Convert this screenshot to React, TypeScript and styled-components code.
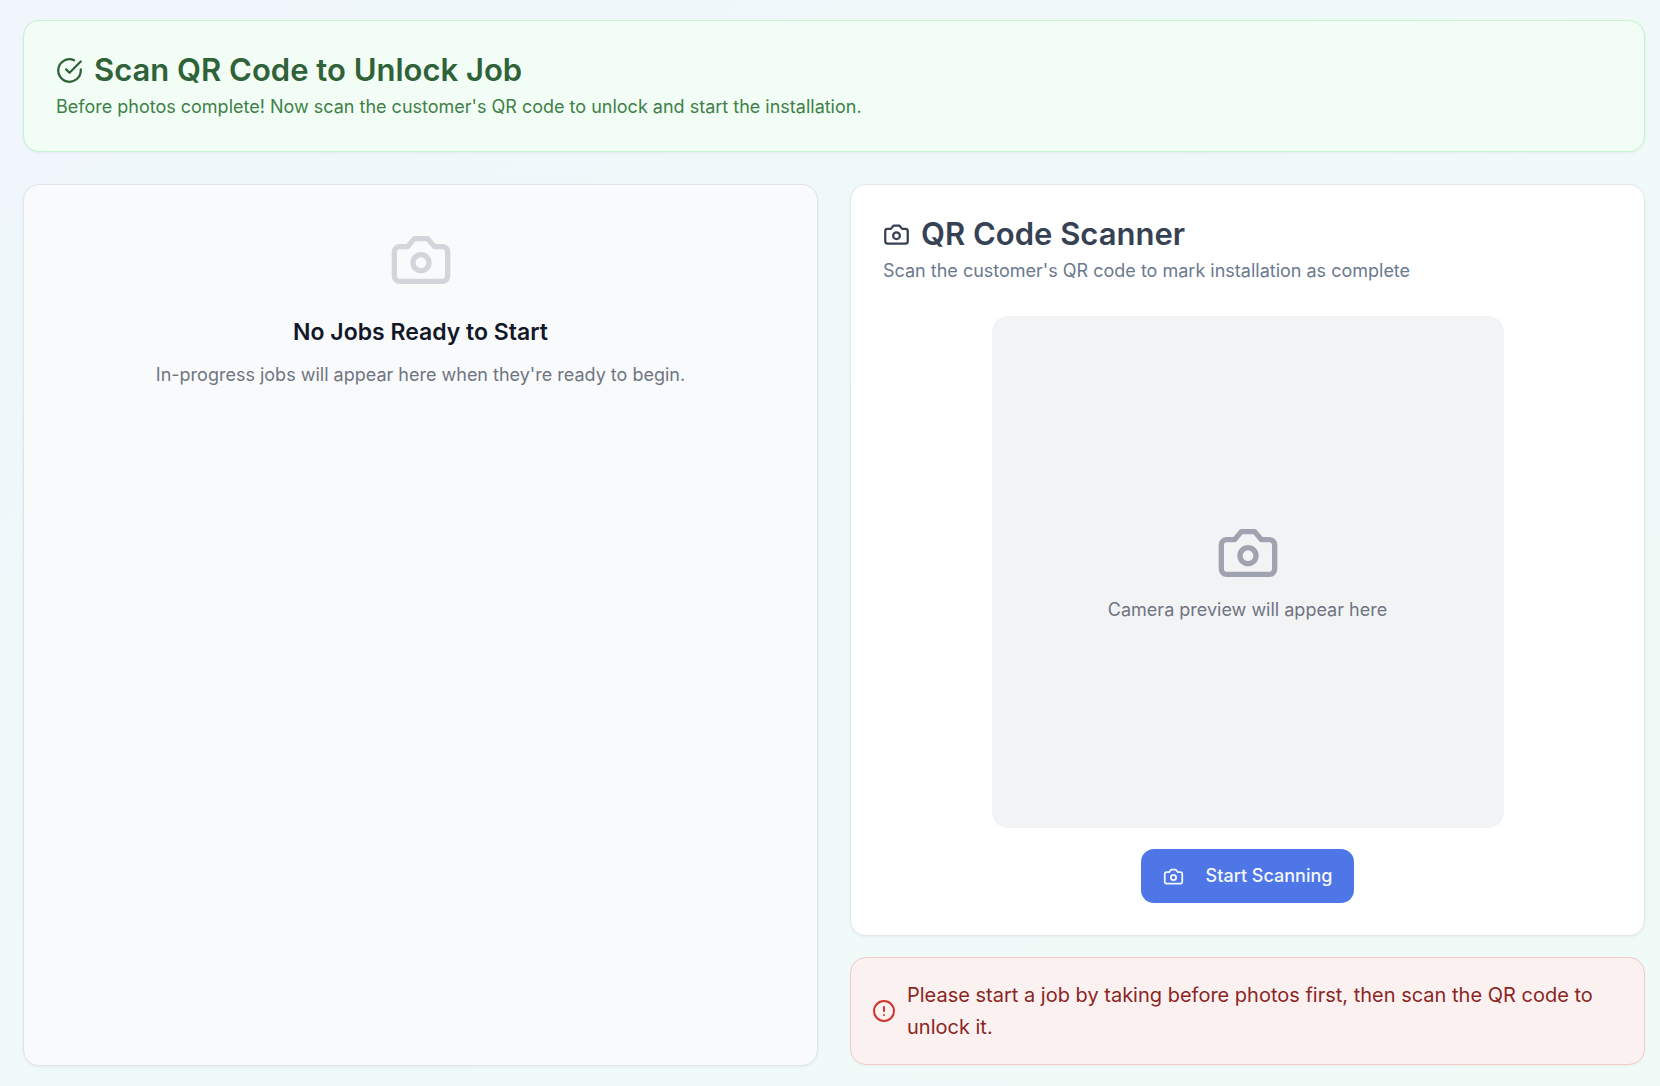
import React from "react";
import styled, { createGlobalStyle } from "styled-components";

const GlobalStyle = createGlobalStyle`
  *, *::before, *::after { box-sizing: border-box; }
  body {
    margin: 0;
    font-family: Inter, "Liberation Sans", sans-serif;
    -webkit-font-smoothing: antialiased;
  }
  h1, h2, h3, p { margin: 0; }
`;

const Page = styled.main`
  min-height: 100vh;
  padding: 20px 15px 20px 23px;
  display: flex;
  flex-direction: column;
  gap: 32px;
  background: linear-gradient(145deg, #f0f6fc 0%, #f0f7fb 15%, #f0f9f9 40%, #f0faf8 65%, #f0faf7 100%);
`;

const tones = {
  plain: { bg: "#ffffff", border: "#e4e8ec" },
  muted: { bg: "#f9fafc", border: "#e1e5e9" },
  success: { bg: "#f2fdf5", border: "#c5f3d2" },
};

const Card = styled.section<{ $tone: keyof typeof tones }>`
  padding: 32px;
  border: 1px solid ${(p) => tones[p.$tone].border};
  border-radius: 16px;
  background: ${(p) => tones[p.$tone].bg};
  box-shadow: 0 1px 3px rgba(0, 0, 0, 0.06);
`;

const Columns = styled.div`
  flex: 1;
  display: grid;
  grid-template-columns: repeat(2, minmax(0, 1fr));
  gap: 32px;
`;

const Stack = styled.div`
  display: flex;
  flex-direction: column;
  gap: 21px;
`;

const Header = styled.header`
  display: flex;
  flex-direction: column;
  gap: 8px;
`;

const Title = styled.h2<{ $color: string }>`
  display: flex;
  align-items: center;
  gap: 11px;
  font-size: 31px;
  line-height: 34px;
  font-weight: 600;
  color: ${(p) => p.$color};
`;

const Text = styled.p<{ $color: string }>`
  font-size: 18px;
  line-height: 24px;
  color: ${(p) => p.$color};
`;

const EmptyState = styled.div`
  display: flex;
  flex-direction: column;
  align-items: center;
  gap: 13px;
  padding-top: 11px;
  text-align: center;
`;

const EmptyTitle = styled.h3`
  margin-top: 9px;
  font-size: 23px;
  line-height: 36px;
  font-weight: 600;
  color: #111827;
`;

const Scanner = styled.div`
  display: flex;
  flex-direction: column;
  align-items: center;
  gap: 21px;
  margin-top: 33px;
`;

const Preview = styled.div`
  width: 100%;
  max-width: 512px;
  aspect-ratio: 1;
  display: flex;
  flex-direction: column;
  align-items: center;
  justify-content: center;
  gap: 13px;
  padding-bottom: 2px;
  border-radius: 16px;
  background: #f2f3f5;
`;

const ScanButton = styled.button`
  display: flex;
  align-items: center;
  gap: 22px;
  height: 54px;
  padding: 0 22px;
  border: 0;
  border-radius: 13px;
  background: #4f76e6;
  color: #f3f6fd;
  font: 500 18px/24px Inter, "Liberation Sans", sans-serif;
  cursor: pointer;
`;

const Alert = styled.div`
  display: flex;
  align-items: center;
  gap: 11px;
  padding: 21px;
  border: 1px solid #f5caca;
  border-radius: 16px;
  background: #fcf1f1;
  color: #cf342f;
  box-shadow: 0 1px 3px rgba(0, 0, 0, 0.04);
`;

const AlertText = styled.p`
  flex: 1;
  font-size: 20px;
  line-height: 32px;
  color: #8a2623;
`;

const Svg = styled.svg`
  flex: none;
  display: block;
  fill: none;
  stroke: currentColor;
  stroke-linecap: round;
  stroke-linejoin: round;
`;

type IconProps = { size: number; color?: string; stroke?: number };

const Camera = ({ size, color, stroke = 2 }: IconProps) => (
  <Svg width={size} height={size} viewBox="0 0 24 24" color={color} strokeWidth={stroke} aria-hidden="true">
    <path d="M14.5 4h-5L7 7H4a2 2 0 0 0-2 2v9a2 2 0 0 0 2 2h16a2 2 0 0 0 2-2V9a2 2 0 0 0-2-2h-3l-2.5-3z" />
    <circle cx="12" cy="13" r="3" />
  </Svg>
);

const CheckCircle = ({ size, color, stroke = 2 }: IconProps) => (
  <Svg width={size} height={size} viewBox="0 0 24 24" color={color} strokeWidth={stroke} aria-hidden="true">
    <path d="M22 11.08V12a10 10 0 1 1-5.93-9.14" />
    <path d="m9 11 3 3L22 4" />
  </Svg>
);

const AlertCircle = ({ size, color, stroke = 2 }: IconProps) => (
  <Svg width={size} height={size} viewBox="0 0 24 24" color={color} strokeWidth={stroke} aria-hidden="true">
    <circle cx="12" cy="12" r="10" />
    <path d="M12 8v4M12 16h.01" />
  </Svg>
);

export default function App() {
  return (
    <>
      <GlobalStyle />
      <Page>
        <Card $tone="success">
          <Header>
            <Title as="h1" $color="#2f6239">
              <CheckCircle size={27} />
              Scan QR Code to Unlock Job
            </Title>
            <Text $color="#408048">
              Before photos complete! Now scan the customer's QR code to unlock and start the installation.
            </Text>
          </Header>
        </Card>
        <Columns>
          <Card $tone="muted">
            <EmptyState>
              <Camera size={64} color="#d2d5da" />
              <EmptyTitle>No Jobs Ready to Start</EmptyTitle>
              <Text $color="#6f7582">In-progress jobs will appear here when they're ready to begin.</Text>
            </EmptyState>
          </Card>
          <Stack>
            <Card $tone="plain">
              <Header>
                <Title $color="#364153">
                  <Camera size={27} />
                  QR Code Scanner
                </Title>
                <Text $color="#6b7990">Scan the customer's QR code to mark installation as complete</Text>
              </Header>
              <Scanner>
                <Preview>
                  <Camera size={64} color="#9ea3af" />
                  <Text $color="#6f7582">Camera preview will appear here</Text>
                </Preview>
                <ScanButton type="button">
                  <Camera size={21} />
                  Start Scanning
                </ScanButton>
              </Scanner>
            </Card>
            <Alert role="alert">
              <AlertCircle size={24} />
              <AlertText>
                Please start a job by taking before photos first, then scan the QR code to unlock it.
              </AlertText>
            </Alert>
          </Stack>
        </Columns>
      </Page>
    </>
  );
}
